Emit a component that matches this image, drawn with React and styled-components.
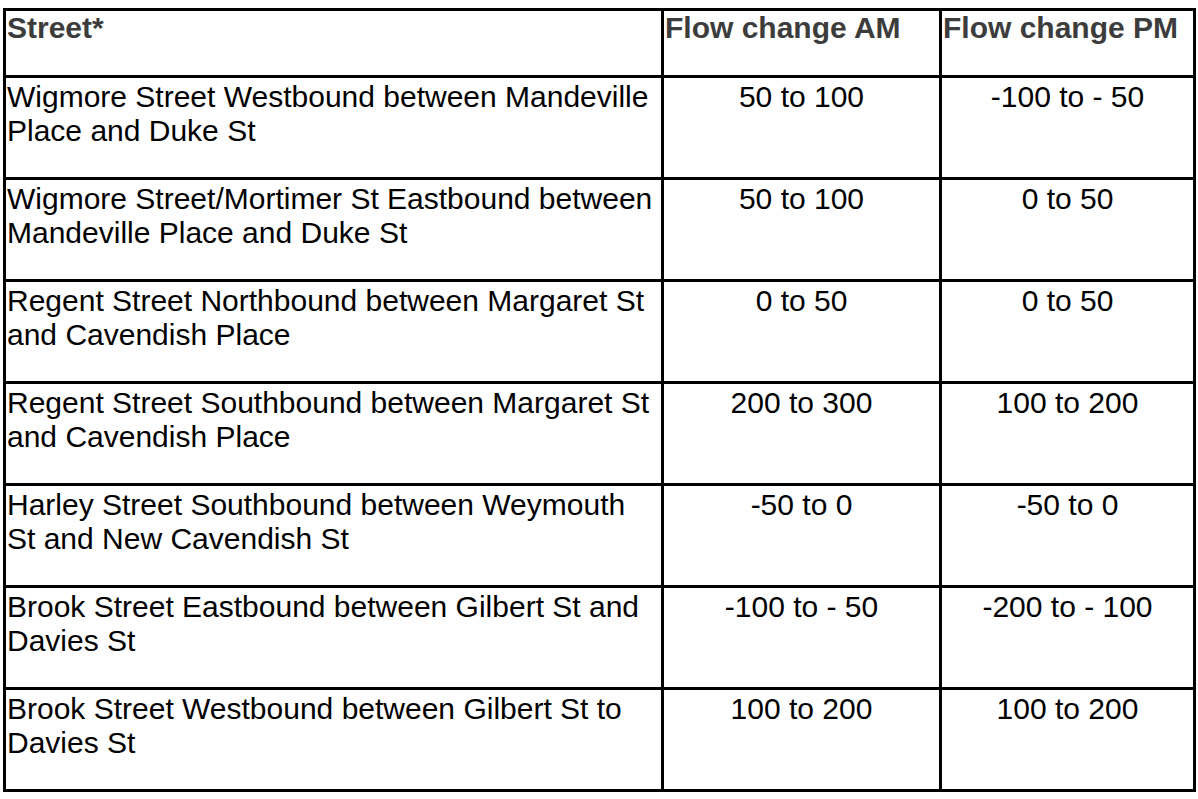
import React from 'react';
import styled, { createGlobalStyle } from 'styled-components';

const GlobalStyle = createGlobalStyle`
  html, body {
    margin: 0;
    padding: 0;
    background: #ffffff;
  }
  body {
    font-family: "Liberation Sans", Arial, sans-serif;
  }
`;

const Page = styled.div`
  padding: 8px 0 0 3px;
`;

const Table = styled.table`
  border-collapse: collapse;
  table-layout: fixed;
  width: 1193px;
  font-size: 30px;
  line-height: 34px;
  color: #000;
`;

const HeadCell = styled.th`
  border: 3px solid #000;
  height: 64px;
  padding: 0 1px;
  vertical-align: top;
  text-align: left;
  font-weight: bold;
  color: #3c3c3c;
`;

const Row = styled.tr`
  height: 102px;
`;

const Cell = styled.td`
  border: 3px solid #000;
  padding: 2px 1px 0;
  vertical-align: top;
  text-align: ${props => (props.center ? 'center' : 'left')};
`;

const rows = [
  ['Wigmore Street Westbound between Mandeville Place and Duke St', '50 to 100', '-100 to - 50'],
  ['Wigmore Street/Mortimer St Eastbound between Mandeville Place and Duke St', '50 to 100', '0 to 50'],
  ['Regent Street Northbound between Margaret St and Cavendish Place', '0 to 50', '0 to 50'],
  ['Regent Street Southbound between Margaret St and Cavendish Place', '200 to 300', '100 to 200'],
  ['Harley Street Southbound between Weymouth St and New Cavendish St', '-50 to 0', '-50 to 0'],
  ['Brook Street Eastbound between Gilbert St and Davies St', '-100 to - 50', '-200 to - 100'],
  ['Brook Street Westbound between Gilbert St to Davies St', '100 to 200', '100 to 200'],
];

export default function App() {
  return (
    <>
      <GlobalStyle />
      <Page>
        <Table>
          <colgroup>
            <col style={{ width: 658 }} />
            <col style={{ width: 278 }} />
            <col style={{ width: 254 }} />
          </colgroup>
          <thead>
            <tr>
              <HeadCell>Street*</HeadCell>
              <HeadCell>Flow change AM</HeadCell>
              <HeadCell>Flow change PM</HeadCell>
            </tr>
          </thead>
          <tbody>
            {rows.map(([street, am, pm]) => (
              <Row key={street}>
                <Cell>{street}</Cell>
                <Cell center>{am}</Cell>
                <Cell center>{pm}</Cell>
              </Row>
            ))}
          </tbody>
        </Table>
      </Page>
    </>
  );
}
